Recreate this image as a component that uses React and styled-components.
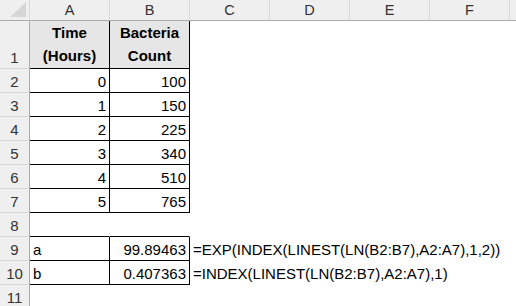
import React from "react";
import styled, { createGlobalStyle } from "styled-components";

const GlobalStyle = createGlobalStyle`
  html, body {
    margin: 0;
    padding: 0;
    background: #ffffff;
    overflow: hidden;
  }
  body {
    font-family: "Liberation Sans", Arial, sans-serif;
  }
`;

const Sheet = styled.div`
  display: grid;
  grid-template-columns: 30px repeat(6, 80px) 7px;
  grid-template-rows: 21px 48px repeat(10, 24px);
  width: 516px;
  height: 306px;
  overflow: hidden;
  font-size: 15px;
  color: #000;
`;

const Corner = styled.div`
  position: relative;
  box-sizing: border-box;
  background: #efefef;
  border-right: 1px solid #d8d8d8;
  border-bottom: 1px solid #ababab;
  svg {
    position: absolute;
    right: 3px;
    bottom: 3px;
  }
`;

const ColHead = styled.div`
  box-sizing: border-box;
  background: #efefef;
  border-right: 1px solid #d8d8d8;
  border-bottom: 1px solid #ababab;
  display: flex;
  align-items: center;
  justify-content: center;
  color: #333;
  font-size: 14.5px;
  line-height: 20px;
`;

const RowHead = styled.div`
  box-sizing: border-box;
  background: #efefef;
  border-right: 1px solid #ababab;
  border-bottom: 1px solid #d8d8d8;
  display: flex;
  align-items: flex-end;
  justify-content: center;
  color: #333;
  font-size: 15px;
  line-height: 18px;
  padding-bottom: 1px;
`;

const Cell = styled.div`
  box-sizing: border-box;
  position: relative;
  min-width: 0;
  display: flex;
  align-items: flex-end;
  justify-content: ${({ $align }) =>
    $align === "right" ? "flex-end" : $align === "center" ? "center" : "flex-start"};
  text-align: ${({ $align }) => $align || "left"};
  padding: 0 3px 1px 3px;
  background: ${({ $fill }) => $fill || "transparent"};
  border-right: 1px solid ${({ $boxRight }) => ($boxRight ? "#000" : "transparent")};
  border-bottom: 1px solid ${({ $boxBottom }) => ($boxBottom ? "#000" : "transparent")};
  font-weight: ${({ $bold }) => ($bold ? 700 : 400)};
  line-height: ${({ $bold }) => ($bold ? "23px" : "18px")};
  white-space: ${({ $wrap }) => ($wrap ? "pre-line" : "nowrap")};
  overflow: ${({ $spill }) => ($spill ? "visible" : "hidden")};
  z-index: ${({ $spill }) => ($spill ? 1 : 0)};
`;

// G is only a sliver at the right edge, so its letter is left off
const cols = ["A", "B", "C", "D", "E", "F", "G"];
const colLabel = (c) => (c === "G" ? "" : c);

const header = { $align: "center", $bold: true, $wrap: true, $fill: "#e7e6e6", $boxRight: true, $boxBottom: true };
const num = { $align: "right", $boxRight: true, $boxBottom: true };
const label = { $align: "left", $boxRight: true, $boxBottom: true };
const formula = { $align: "left", $spill: true };

const rows = [
  { A: ["Time\n(Hours)", header], B: ["Bacteria\nCount", header] },
  { A: ["0", num], B: ["100", num] },
  { A: ["1", num], B: ["150", num] },
  { A: ["2", num], B: ["225", num] },
  { A: ["3", num], B: ["340", num] },
  { A: ["4", num], B: ["510", num] },
  { A: ["5", num], B: ["765", num] },
  { A: ["", { $boxBottom: true }], B: ["", { $boxBottom: true }] },
  {
    A: ["a", label],
    B: ["99.89463", num],
    C: ["=EXP(INDEX(LINEST(LN(B2:B7),A2:A7),1,2))", formula],
  },
  {
    A: ["b", label],
    B: ["0.407363", num],
    C: ["=INDEX(LINEST(LN(B2:B7),A2:A7),1)", formula],
  },
  {},
];

const SelectAll = () => (
  <svg width="16" height="15" viewBox="0 0 16 15">
    <polygon points="16,0 16,15 0,15" fill="#d6d6d6" />
  </svg>
);

export default function App() {
  return (
    <>
      <GlobalStyle />
      <Sheet>
        <Corner>
          <SelectAll />
        </Corner>
        {cols.map((c) => (
          <ColHead key={c}>{colLabel(c)}</ColHead>
        ))}
        {rows.map((row, i) => (
          <React.Fragment key={i}>
            <RowHead>{i + 1}</RowHead>
            {cols.map((c) => {
              const [text, props] = row[c] || ["", {}];
              return (
                <Cell key={c} {...props}>
                  {text}
                </Cell>
              );
            })}
          </React.Fragment>
        ))}
      </Sheet>
    </>
  );
}
